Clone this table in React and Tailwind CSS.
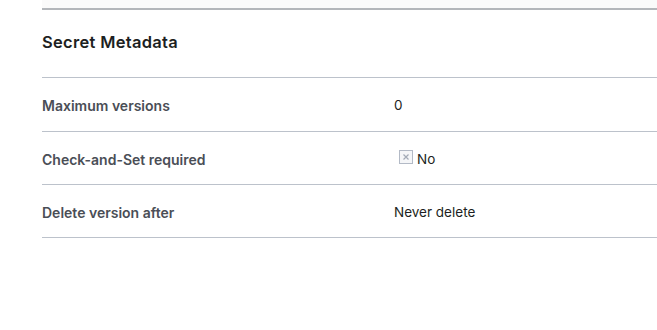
export default function App() {
  const rows = [
    { label: "Maximum versions", value: "0", h: "h-[54px]" },
    { label: "Check-and-Set required", value: "No", icon: true, h: "h-[53px]" },
    { label: "Delete version after", value: "Never delete", h: "h-[53px]" },
  ];
  return (
    <div className="w-[657px] h-[330px] bg-white overflow-hidden" style={{ fontFamily: "Inter, 'Noto Sans', sans-serif" }}>
      <div className="pl-[42px]">
        <div className="h-[10px] bg-[#fafafa] border-b-2 border-[#b3b6ba]" />
        <div className="h-[68px] flex items-center pb-[3px] border-b border-[#bcc2cb]">
          <h2 className="text-[16.5px] font-semibold text-[#1d1f22] tracking-[0.3px]">Secret Metadata</h2>
        </div>
        {rows.map((r) => (
          <div key={r.label} className={`${r.h} flex items-center pt-[2px] border-b border-[#bcc2cb]`}>
            <div className="w-[352px] text-[14px] font-semibold text-[#4a4e56]">{r.label}</div>
            <div className="flex items-center text-[13.5px] text-[#1d1f22]">
              {r.icon && (
                <svg width="14" height="14" viewBox="0 0 14 14" className="ml-[5px] mr-[4px] -mt-[5px]">
                  <rect x="0.5" y="0.5" width="13" height="13" fill="#f5f6f8" stroke="#b3bac6" />
                  <path d="M4.5 4.5 L9.5 9.5 M9.5 4.5 L4.5 9.5" stroke="#a3aab6" strokeWidth="1.2" />
                </svg>
              )}
              <span>{r.value}</span>
            </div>
          </div>
        ))}
      </div>
    </div>
  );
}
